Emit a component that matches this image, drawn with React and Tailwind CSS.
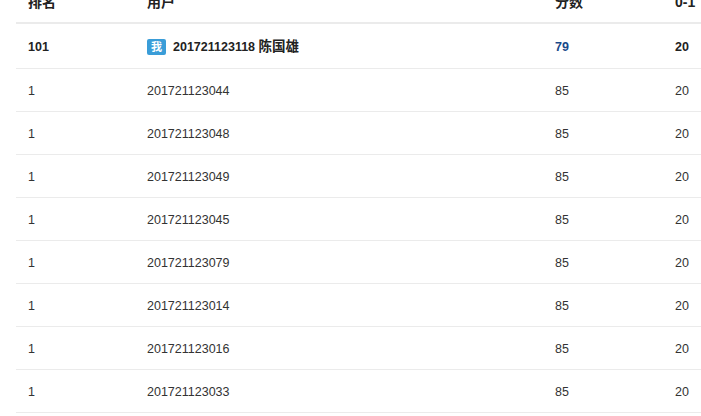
export default function App() {
  const rows = [
    "201721123044",
    "201721123048",
    "201721123049",
    "201721123045",
    "201721123079",
    "201721123014",
    "201721123016",
    "201721123033",
    "201721123050",
  ];
  const font = { fontFamily: '"Liberation Sans", "Noto Sans CJK SC", sans-serif' };
  return (
    <div className="w-[701px] h-[416px] overflow-hidden bg-white text-[#333]" style={font}>
      <div className="ml-4 w-[760px] -mt-[18px] text-[12.5px]">
        <div className="flex h-[42px] items-center border-b-2 border-[#ebebeb] font-bold text-[14px] text-[#222]">
          <div className="w-[119px] pl-3">排名</div>
          <div className="w-[408px] pl-3">用户</div>
          <div className="w-[120px] pl-3">分数</div>
          <div className="pl-3">0-1</div>
        </div>
        <div className="flex h-[45px] pt-[2px] items-center border-b border-[#ebebeb] font-bold text-[#222]">
          <div className="w-[119px] pl-3">101</div>
          <div className="w-[408px] pl-3 flex items-center">
            <span className="inline-flex items-center justify-center w-[19px] h-[16px] rounded-[2px] bg-[#3a9dd8] text-white text-[11px] mr-[7px]">我</span>
            <span>201721123118 <span className="text-[13.5px]">陈国雄</span></span>
          </div>
          <div className="w-[120px] pl-3 text-[#1a4a8a]">79</div>
          <div className="pl-3">20</div>
        </div>
        {rows.map((r, i) => (
          <div key={i} className="flex h-[43px] pt-[2px] items-center border-b border-[#ebebeb]">
            <div className="w-[119px] pl-3">1</div>
            <div className="w-[408px] pl-3">{r}</div>
            <div className="w-[120px] pl-3">85</div>
            <div className="pl-3">20</div>
          </div>
        ))}
      </div>
    </div>
  );
}
